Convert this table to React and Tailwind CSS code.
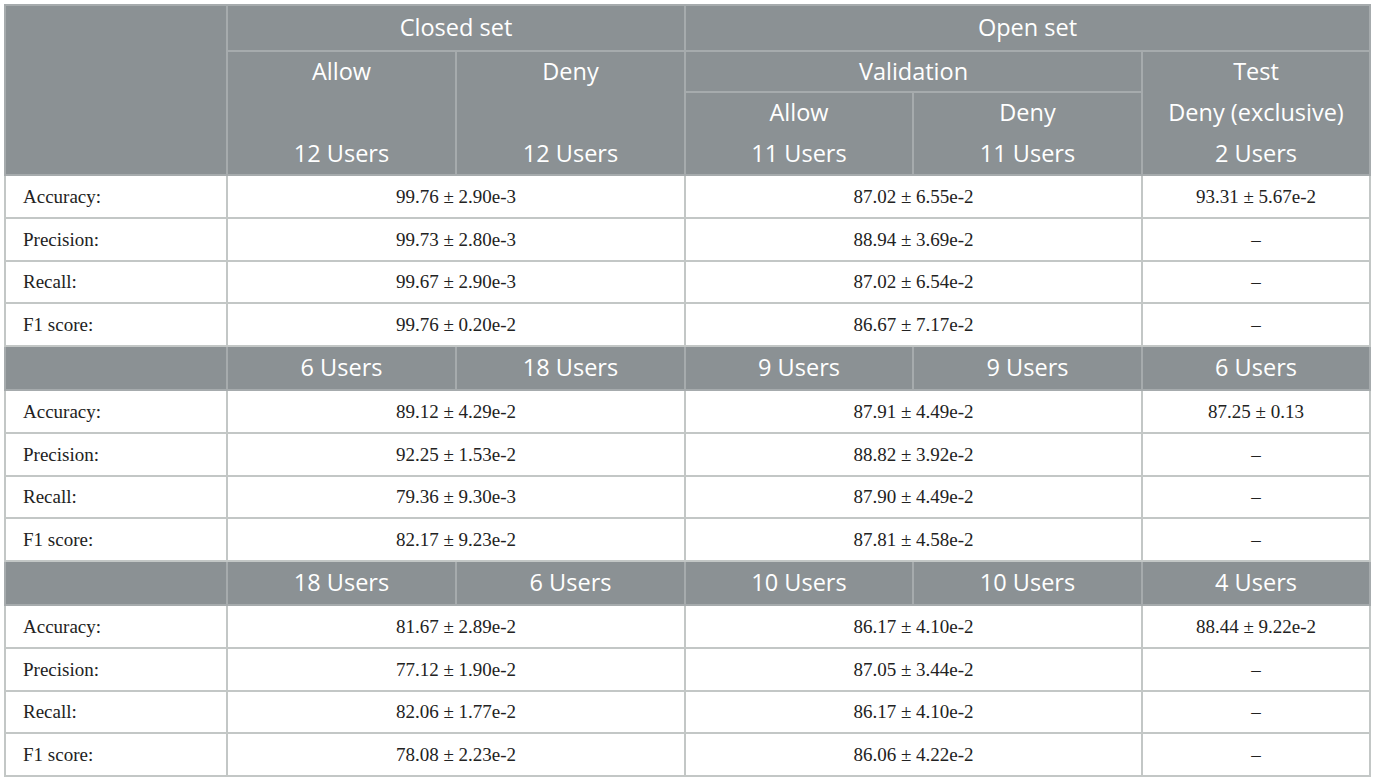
import React from 'react';

const head = "font-['Open_Sans',sans-serif] text-[23.5px] font-normal text-white bg-[#8b9194] border-2 border-[#a6abad] text-center align-middle p-0 leading-none";
const body = "font-['Liberation_Serif',serif] text-[19px] text-[#222] bg-white border-2 border-[#c3c7c6] text-center align-middle p-0 leading-none";
const label = "font-['Liberation_Serif',serif] text-[19px] text-[#222] bg-white border-2 border-[#c3c7c6] text-left align-middle pl-[17px] leading-none";

const blocks = [
  {
    users: null,
    rows: [
      ['Accuracy:', '99.76 ± 2.90e-3', '87.02 ± 6.55e-2', '93.31 ± 5.67e-2'],
      ['Precision:', '99.73 ± 2.80e-3', '88.94 ± 3.69e-2', '–'],
      ['Recall:', '99.67 ± 2.90e-3', '87.02 ± 6.54e-2', '–'],
      ['F1 score:', '99.76 ± 0.20e-2', '86.67 ± 7.17e-2', '–'],
    ],
  },
  {
    users: ['6 Users', '18 Users', '9 Users', '9 Users', '6 Users'],
    rows: [
      ['Accuracy:', '89.12 ± 4.29e-2', '87.91 ± 4.49e-2', '87.25 ± 0.13'],
      ['Precision:', '92.25 ± 1.53e-2', '88.82 ± 3.92e-2', '–'],
      ['Recall:', '79.36 ± 9.30e-3', '87.90 ± 4.49e-2', '–'],
      ['F1 score:', '82.17 ± 9.23e-2', '87.81 ± 4.58e-2', '–'],
    ],
  },
  {
    users: ['18 Users', '6 Users', '10 Users', '10 Users', '4 Users'],
    rows: [
      ['Accuracy:', '81.67 ± 2.89e-2', '86.17 ± 4.10e-2', '88.44 ± 9.22e-2'],
      ['Precision:', '77.12 ± 1.90e-2', '87.05 ± 3.44e-2', '–'],
      ['Recall:', '82.06 ± 1.77e-2', '86.17 ± 4.10e-2', '–'],
      ['F1 score:', '78.08 ± 2.23e-2', '86.06 ± 4.22e-2', '–'],
    ],
  },
];

function Lines({ items, h }) {
  return (
    <div className={'flex flex-col justify-between ' + h}>
      {items.map((t, i) => (
        <div key={i} className="h-[40px] flex items-center justify-center">{t}</div>
      ))}
    </div>
  );
}

export default function App() {
  return (
    <div className="bg-white p-1 w-[1375px] h-[781px]">
      <table className="table-fixed border-collapse w-[1365px] border-2 border-[#c3c7c6]">
        <colgroup>
          <col className="w-[222px]" />
          <col className="w-[229px]" />
          <col className="w-[229px]" />
          <col className="w-[228px]" />
          <col className="w-[229px]" />
          <col className="w-[228px]" />
        </colgroup>
        <thead>
          <tr className="h-[46px]">
            <th rowSpan={3} className={head}></th>
            <th colSpan={2} className={head}>Closed set</th>
            <th colSpan={3} className={head}>Open set</th>
          </tr>
          <tr className="h-[41px]">
            <th rowSpan={2} className={head}>
              <Lines items={['Allow', '12 Users']} h="h-[122px]" />
            </th>
            <th rowSpan={2} className={head}>
              <Lines items={['Deny', '12 Users']} h="h-[122px]" />
            </th>
            <th colSpan={2} className={head}>Validation</th>
            <th rowSpan={2} className={head}>
              <Lines items={['Test', 'Deny (exclusive)', '2 Users']} h="h-[122px]" />
            </th>
          </tr>
          <tr className="h-[83px]">
            <th className={head}>
              <Lines items={['Allow', '11 Users']} h="h-[81px]" />
            </th>
            <th className={head}>
              <Lines items={['Deny', '11 Users']} h="h-[81px]" />
            </th>
          </tr>
        </thead>
        <tbody>
          {blocks.map((b, bi) => (
            <React.Fragment key={bi}>
              {b.users && (
                <tr className="h-[44px]">
                  <td className={head}></td>
                  {b.users.map((u, i) => (
                    <td key={i} className={head}>{u}</td>
                  ))}
                </tr>
              )}
              {b.rows.map((r, ri) => (
                <tr key={ri} className="h-[42.75px]">
                  <td className={label}>{r[0]}</td>
                  <td colSpan={2} className={body}>{r[1]}</td>
                  <td colSpan={2} className={body}>{r[2]}</td>
                  <td className={body}>{r[3]}</td>
                </tr>
              ))}
            </React.Fragment>
          ))}
        </tbody>
      </table>
    </div>
  );
}
